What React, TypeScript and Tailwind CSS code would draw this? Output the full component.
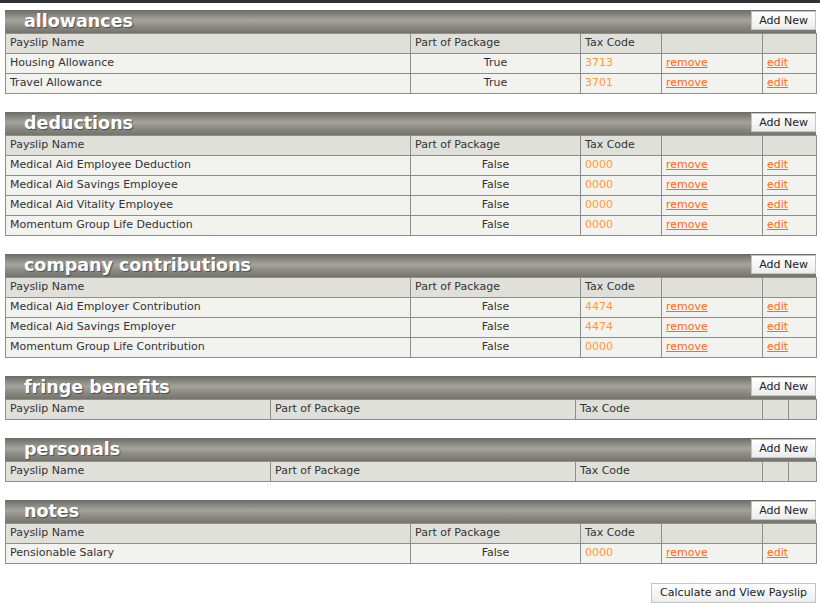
type Row = { name: string; pkg: string; code: string };
type Section = { title: string; rows: Row[]; cols: "full" | "empty" };

const sections: Section[] = [
  {
    title: "allowances",
    cols: "full",
    rows: [
      { name: "Housing Allowance", pkg: "True", code: "3713" },
      { name: "Travel Allowance", pkg: "True", code: "3701" },
    ],
  },
  {
    title: "deductions",
    cols: "full",
    rows: [
      { name: "Medical Aid Employee Deduction", pkg: "False", code: "0000" },
      { name: "Medical Aid Savings Employee", pkg: "False", code: "0000" },
      { name: "Medical Aid Vitality Employee", pkg: "False", code: "0000" },
      { name: "Momentum Group Life Deduction", pkg: "False", code: "0000" },
    ],
  },
  {
    title: "company contributions",
    cols: "full",
    rows: [
      { name: "Medical Aid Employer Contribution", pkg: "False", code: "4474" },
      { name: "Medical Aid Savings Employer", pkg: "False", code: "4474" },
      { name: "Momentum Group Life Contribution", pkg: "False", code: "0000" },
    ],
  },
  { title: "fringe benefits", cols: "empty", rows: [] },
  { title: "personals", cols: "empty", rows: [] },
  {
    title: "notes",
    cols: "full",
    rows: [{ name: "Pensionable Salary", pkg: "False", code: "0000" }],
  },
];

const cell = "h-[20px] border border-[#8d8d8d] px-[4px] py-0 align-middle";

function SectionTable({ s }: { s: Section }) {
  const widths = s.cols === "full" ? [405, 170, 81, 101, 54] : [265, 305, 187, 26, 28];
  return (
    <div className="mb-[18px]">
      <div className="flex h-[23px] items-start justify-between bg-[linear-gradient(to_bottom,#6c6c66_0%,#a4a49d_45%,#8c8c85_70%,#74746d_100%)]">
        <h2 className="pl-[19px] text-[17.5px] font-bold leading-[22px] text-white [text-shadow:1px_1px_1px_#4a4a55]">
          {s.title}
        </h2>
        <button className="mt-[1px] h-[19px] border border-[#c4c4c4] bg-[linear-gradient(to_bottom,#ffffff,#ececec)] px-[7px] text-[11px] leading-[17px] text-[#222]">
          Add New
        </button>
      </div>
      <table className="w-full table-fixed border-collapse text-[11px] text-[#333]">
        <colgroup>
          {widths.map((w, i) => (
            <col key={i} style={{ width: w }} />
          ))}
        </colgroup>
        <tbody>
          <tr className="bg-[#e0e0db]">
            <td className={cell}>Payslip Name</td>
            <td className={cell}>Part of Package</td>
            <td className={cell}>Tax Code</td>
            <td className={cell}></td>
            <td className={cell}></td>
          </tr>
          {s.rows.map((r) => (
            <tr key={r.name} className="bg-[#f2f2ef]">
              <td className={cell}>{r.name}</td>
              <td className={`${cell} text-center`}>{r.pkg}</td>
              <td className={`${cell} text-[#ff9a33]`}>{r.code}</td>
              <td className={cell}>
                <a href="#" className="text-[#ff6a13] underline">remove</a>
              </td>
              <td className={cell}>
                <a href="#" className="text-[#ff6a13] underline">edit</a>
              </td>
            </tr>
          ))}
        </tbody>
      </table>
    </div>
  );
}

export default function App() {
  return (
    <div className="min-h-[605px] bg-white font-['DejaVu_Sans',Verdana,sans-serif]">
      <div className="h-[3px] bg-[#2e3236]" />
      <div className="pl-[5px] pr-[4px] pt-[7px]">
        {sections.map((s) => (
          <SectionTable key={s.title} s={s} />
        ))}
        <div className="flex justify-end pt-[1px]">
          <button className="h-[20px] border border-[#c4c4c4] bg-[linear-gradient(to_bottom,#ffffff,#ececec)] px-[8px] text-[11px] leading-[18px] text-[#222]">
            Calculate and View Payslip
          </button>
        </div>
      </div>
    </div>
  );
}
